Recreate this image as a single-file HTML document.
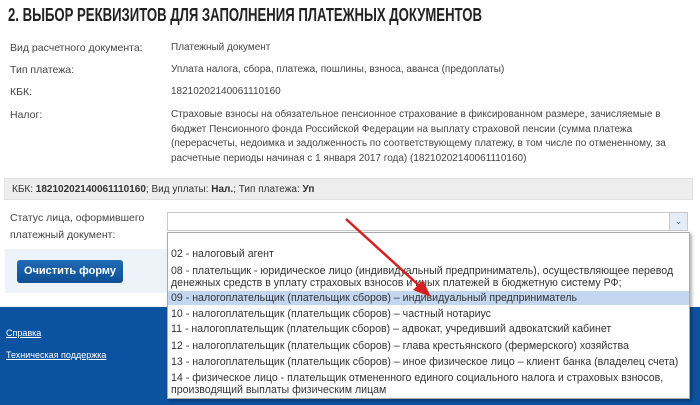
<!DOCTYPE html>
<html><head><meta charset="utf-8"><style>
*{margin:0;padding:0;box-sizing:border-box}
body{width:700px;height:405px;overflow:hidden;background:#fff;font-family:"Liberation Sans",sans-serif;color:#333;position:relative;font-size:10px}
.a{position:absolute;white-space:nowrap}
h1{position:absolute;left:8px;top:5px;font-family:"Liberation Sans Narrow","Liberation Sans",sans-serif;font-size:18px;font-weight:bold;color:#222;transform:scaleX(.73);transform-origin:left;white-space:nowrap}
.l{left:10px;color:#444;font-size:10.5px}
.v{left:171px;color:#444;font-size:10px}
.dd div{position:absolute;left:3px;white-space:nowrap;font-size:10.6px;color:#333}
</style></head><body>
<h1>2. ВЫБОР РЕКВИЗИТОВ ДЛЯ ЗАПОЛНЕНИЯ ПЛАТЕЖНЫХ ДОКУМЕНТОВ</h1>
<div class="a l" style="top:42px">Вид расчетного документа:</div><div class="a v" style="top:42px">Платежный документ</div>
<div class="a l" style="top:64px">Тип платежа:</div><div class="a v" style="top:64px">Уплата налога, сбора, платежа, пошлины, взноса, аванса (предоплаты)</div>
<div class="a l" style="top:86px">КБК:</div><div class="a v" style="top:86px">18210202140061110160</div>
<div class="a l" style="top:109px">Налог:</div>
<div class="a v" style="top:108px;line-height:14.7px">Страховые взносы на обязательное пенсионное страхование в фиксированном размере, зачисляемые в<br>бюджет Пенсионного фонда Российской Федерации на выплату страховой пенсии (сумма платежа<br>(перерасчеты, недоимка и задолженность по соответствующему платежу, в том числе по отмененному, за<br>расчетные периоды начиная с 1 января 2017 года) (18210202140061110160)</div>
<div class="a" style="left:4px;top:178px;width:689px;height:22px;background:#eee;border:1px solid #e2e2e2;padding:5px 0 0 7px;color:#333;font-size:10px">КБК: <b>18210202140061110160</b>; Вид уплаты: <b>Нал.</b>; Тип платежа: <b>Уп</b></div>
<div class="a l" style="top:210px;line-height:17px">Статус лица, оформившего<br>платежный документ:</div>
<div class="a" style="left:167px;top:212px;width:521px;height:19px;border:1px solid #c8c8c8;background:#fff"><div style="position:absolute;right:0;top:0;width:18px;height:17px;background:#e4edf7;border-left:1px solid #ccc;color:#3a6aa8;font-size:9px;text-align:center;line-height:17px">&#8964;</div></div>
<div class="a" style="left:5px;top:249px;width:162px;height:44px;background:#eef3fa"></div>
<div class="a" style="left:17px;top:260px;width:106px;height:23px;background:linear-gradient(#1f6bb5,#0f4f93);border-radius:3px;color:#fff;font-weight:bold;font-size:11px;text-align:center;line-height:23px">Очистить форму</div>
<div class="a" style="left:0;top:307px;width:700px;height:98px;background:#0b52a0"></div>
<div class="a" style="left:6px;top:328px;color:#fff;text-decoration:underline;font-size:9px">Справка</div>
<div class="a" style="left:6px;top:350px;color:#fff;text-decoration:underline;font-size:9px">Техническая поддержка</div>
<div class="a dd" style="left:167px;top:232px;width:523px;height:167px;background:#fff;border:1px solid #aaa;box-shadow:2px 2px 3px rgba(0,0,0,.3)">
<div style="top:15px">02 - налоговый агент</div>
<div style="top:32px;line-height:12px">08 - плательщик - юридическое лицо (индивидуальный предприниматель), осуществляющее перевод<br>денежных средств в уплату страховых взносов и иных платежей в бюджетную систему РФ;</div>
<div style="top:58px;left:0;width:521px;height:14px;background:#c3d8f0;padding-left:3px;line-height:14px">09 - налогоплательщик (плательщик сборов) – индивидуальный предприниматель</div>
<div style="top:75px">10 - налогоплательщик (плательщик сборов) – частный нотариус</div>
<div style="top:90px">11 - налогоплательщик (плательщик сборов) – адвокат, учредивший адвокатский кабинет</div>
<div style="top:107px">12 - налогоплательщик (плательщик сборов) – глава крестьянского (фермерского) хозяйства</div>
<div style="top:123px">13 - налогоплательщик (плательщик сборов) – иное физическое лицо – клиент банка (владелец счета)</div>
<div style="top:139px;line-height:12px">14 - физическое лицо - плательщик отмененного единого социального налога и страховых взносов,<br>производящий выплаты физическим лицам</div>
</div>
<svg class="a" style="left:0;top:0" width="700" height="405"><line x1="346" y1="219" x2="424" y2="290" stroke="#d42020" stroke-width="2.5"/><polygon points="431,297 413,290 423,280" fill="#d42020"/></svg>
</body></html>
